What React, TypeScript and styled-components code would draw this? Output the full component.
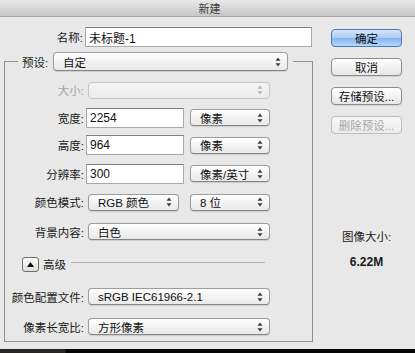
import React from "react";
import styled, { createGlobalStyle, css } from "styled-components";

const Global = createGlobalStyle`
  html, body { margin: 0; padding: 0; background: #e8e8e8; }
  body { font-family: "Liberation Sans", "Noto Sans CJK SC", sans-serif; }
  * { box-sizing: border-box; }
`;

const Window = styled.div`
  width: 415px;
  height: 353px;
  display: flex;
  flex-direction: column;
  background: #e8e8e8;
  overflow: hidden;
  color: #1a1a1a;
`;

const TitleBar = styled.div`
  height: 17px;
  flex-shrink: 0;
  display: flex;
  align-items: center;
  justify-content: center;
  background: linear-gradient(#e9e9e9, #c6c6c6);
  border-bottom: 1px solid #a4a4a4;
  font-size: 11px;
  color: #3c3c3c;
  padding-left: 4px;
`;

const Body = styled.div`
  flex: 1;
  display: flex;
`;

const LeftCol = styled.div`
  width: 313px;
  display: flex;
  flex-direction: column;
  padding-top: 10px;
`;

const NameRow = styled.div`
  display: flex;
  align-items: center;
  height: 20px;
`;

const NameLabel = styled.div`
  width: 85px;
  text-align: right;
  padding-right: 2px;
  font-size: 11.5px;
`;

const TextInput = styled.input<{ $w: number }>`
  width: ${(p) => p.$w}px;
  height: 20px;
  border: 1px solid #a9a9a9;
  border-top-color: #7f7f7f;
  background: #fff;
  font-family: inherit;
  font-size: 12px;
  color: #111;
  padding: 0 3px;
  margin: 0;
  outline: none;
`;

const Group = styled.fieldset`
  margin: 5px 0 0 4px;
  width: 309px;
  border: 1px solid #8f8f8f;
  padding: 5px 0 0 0;
  min-inline-size: 0;
`;

const Legend = styled.legend`
  margin-left: 13px;
  padding: 0 5px 0 4px;
  display: flex;
  align-items: center;
  height: 19px;
`;

const LegendLabel = styled.span`
  width: 31px;
  font-size: 11.5px;
`;

const Row = styled.div<{ $h: number }>`
  display: flex;
  align-items: center;
  height: ${(p) => p.$h}px;
`;

const Label = styled.div<{ $disabled?: boolean }>`
  width: 81px;
  text-align: right;
  padding-right: 2px;
  font-size: 11.5px;
  color: ${(p) => (p.$disabled ? "#a3a3a3" : "#1a1a1a")};
`;

const PopUpBox = styled.div<{ $w: number; $h: number; $ml: number; $disabled?: boolean }>`
  width: ${(p) => p.$w}px;
  height: ${(p) => p.$h}px;
  margin-left: ${(p) => p.$ml}px;
  display: flex;
  align-items: center;
  justify-content: space-between;
  padding: 0 6px 0 9px;
  border-radius: 4px;
  font-size: 11.5px;
  ${(p) =>
    p.$disabled
      ? css`
          border: 1px solid #c4c4c4;
          background: linear-gradient(#f4f4f4, #ebebeb);
          color: #a8a8a8;
        `
      : css`
          border: 1px solid #9c9c9c;
          border-bottom-color: #858585;
          background: linear-gradient(#ffffff, #f1f1f1 60%, #e9e9e9);
          box-shadow: 0 1px 1px rgba(0, 0, 0, 0.12);
          color: #111;
        `}
`;

const Arrows = ({ color }: { color: string }) => (
  <svg width="6" height="10" viewBox="0 0 6 10">
    <path d="M3 0.5 L5.5 3.8 L0.5 3.8 Z" fill={color} />
    <path d="M0.5 6.2 L5.5 6.2 L3 9.5 Z" fill={color} />
  </svg>
);

const PopUp = ({
  w,
  h = 17,
  ml = 2,
  disabled,
  children,
}: {
  w: number;
  h?: number;
  ml?: number;
  disabled?: boolean;
  children?: React.ReactNode;
}) => (
  <PopUpBox $w={w} $h={h} $ml={ml} $disabled={disabled}>
    <span>{children}</span>
    <Arrows color={disabled ? "#b5b5b5" : "#3a3a3a"} />
  </PopUpBox>
);

const AdvancedRow = styled.div<{ $h: number }>`
  display: flex;
  align-items: center;
  height: ${(p) => p.$h}px;
  padding-left: 17px;
  padding-right: 47px;
`;

const ToggleBtn = styled.div`
  width: 17px;
  height: 15px;
  border: 1px solid #6f6f6f;
  border-radius: 3px;
  background: linear-gradient(#fdfdfd, #dcdcdc);
  display: flex;
  align-items: center;
  justify-content: center;
  margin-right: 4px;
`;

const AdvText = styled.span`
  font-size: 11.5px;
`;

const Rule = styled.div`
  flex: 1;
  height: 1px;
  background: #b4b4b4;
  margin: -3px 0 0 5px;
`;

const RightCol = styled.div`
  display: flex;
  flex-direction: column;
  padding: 12px 0 0 18px;
  width: 89px;
`;

const Buttons = styled.div`
  display: flex;
  flex-direction: column;
  gap: 11px;
`;

const Btn = styled.button<{ $primary?: boolean; $disabled?: boolean }>`
  width: 71px;
  height: 18px;
  margin: 0;
  padding: 0;
  border-radius: 4px;
  font-family: inherit;
  font-size: 11.5px;
  white-space: nowrap;
  display: flex;
  align-items: center;
  justify-content: center;
  ${(p) =>
    p.$primary
      ? css`
          border: 1px solid #4f78b4;
          background: linear-gradient(#d7e6f9, #a9cbf3 50%, #86b6ef 52%, #b4d7fa);
          color: #0d0d0d;
        `
      : p.$disabled
      ? css`
          border: 1px solid #bdbdbd;
          background: linear-gradient(#f8f8f8, #ececec);
          color: #a6a6a6;
        `
      : css`
          border: 1px solid #8c8c8c;
          background: linear-gradient(#ffffff, #f0f0f0 60%, #e6e6e6);
          box-shadow: 0 1px 1px rgba(0, 0, 0, 0.1);
          color: #111;
        `}
`;

const Info = styled.div`
  margin-top: 95px;
  width: 71px;
  display: flex;
  flex-direction: column;
  align-items: center;
`;

const InfoLabel = styled.div`
  font-size: 11.5px;
  line-height: 16px;
`;

const InfoValue = styled.div`
  margin-top: 9px;
  font-size: 12px;
  font-weight: bold;
  line-height: 16px;
`;

const BottomStrip = styled.div`
  height: 4px;
  flex-shrink: 0;
  background: linear-gradient(90deg, #2a2520 0, #2a2520 65px, #050505 66px);
`;

export default function App() {
  return (
    <>
      <Global />
      <Window>
        <TitleBar>新建</TitleBar>
        <Body>
          <LeftCol>
            <NameRow>
              <NameLabel>名称:</NameLabel>
              <TextInput $w={227} defaultValue="未标题-1" readOnly />
            </NameRow>
            <Group>
              <Legend>
                <LegendLabel>预设:</LegendLabel>
                <PopUp w={235} h={19} ml={0}>
                  自定
                </PopUp>
              </Legend>
              <Row $h={28}>
                <Label $disabled>大小:</Label>
                <PopUp w={182} disabled />
              </Row>
              <Row $h={27}>
                <Label>宽度:</Label>
                <TextInput $w={98} defaultValue="2254" readOnly />
                <PopUp w={80} ml={6}>
                  像素
                </PopUp>
              </Row>
              <Row $h={28}>
                <Label>高度:</Label>
                <TextInput $w={98} defaultValue="964" readOnly />
                <PopUp w={80} ml={6}>
                  像素
                </PopUp>
              </Row>
              <Row $h={29}>
                <Label>分辨率:</Label>
                <TextInput $w={98} defaultValue="300" readOnly />
                <PopUp w={80} ml={6}>
                  像素/英寸
                </PopUp>
              </Row>
              <Row $h={28}>
                <Label>颜色模式:</Label>
                <PopUp w={91}>RGB 颜色</PopUp>
                <PopUp w={80} ml={11}>
                  8 位
                </PopUp>
              </Row>
              <Row $h={31}>
                <Label>背景内容:</Label>
                <PopUp w={182}>白色</PopUp>
              </Row>
              <AdvancedRow $h={34}>
                <ToggleBtn>
                  <svg width="7" height="5" viewBox="0 0 7 5">
                    <path d="M3.5 0 L7 5 L0 5 Z" fill="#111" />
                  </svg>
                </ToggleBtn>
                <AdvText>高级</AdvText>
                <Rule />
              </AdvancedRow>
              <Row $h={31}>
                <Label>颜色配置文件:</Label>
                <PopUp w={182}>sRGB IEC61966-2.1</PopUp>
              </Row>
              <Row $h={29}>
                <Label>像素长宽比:</Label>
                <PopUp w={182}>方形像素</PopUp>
              </Row>
            </Group>
          </LeftCol>
          <RightCol>
            <Buttons>
              <Btn $primary>确定</Btn>
              <Btn>取消</Btn>
              <Btn>存储预设...</Btn>
              <Btn $disabled>删除预设...</Btn>
            </Buttons>
            <Info>
              <InfoLabel>图像大小:</InfoLabel>
              <InfoValue>6.22M</InfoValue>
            </Info>
          </RightCol>
        </Body>
        <BottomStrip />
      </Window>
    </>
  );
}
